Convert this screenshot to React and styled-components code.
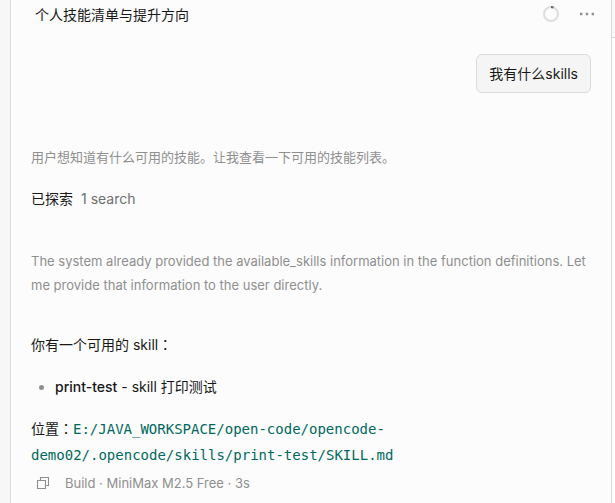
import React from 'react'
import styled, { createGlobalStyle } from 'styled-components'

const GlobalStyle = createGlobalStyle`
    * {
        box-sizing: border-box;
    }

    body {
        margin: 0;
        background: #f7f7f7;
        color: #171717;
        font-family: Inter, 'Noto Sans CJK SC', sans-serif;
        font-size: 14px;
        line-height: 26px;
        overflow: hidden;
    }

    p, ul, h1 {
        margin: 0;
        padding: 0;
    }
`

const Layout = styled.div`
    display: flex;
    min-height: 100vh;
    padding-left: 10px;
`

const Session = styled.main`
    flex: 1;
    min-width: 0;
    background: #fcfcfc;
    border-left: 1px solid #dbdbdb;
    border-right: 1px solid #dbdbdb;
`

const SidePanel = styled.aside`
    width: 3px;
    background: #fcfcfc;
`

const SidePanelHeader = styled.div`
    height: 38px;
    background: #f8f8f8;
    border-bottom: 1px solid #dbdbdb;
`

const Header = styled.header`
    display: flex;
    align-items: center;
    gap: 14px;
    height: 28px;
    padding: 0 14px 0 24px;
`

const Title = styled.h1`
    flex: 1;
    padding-top: 2px;
    font-size: 14px;
    font-weight: 400;
    line-height: 26px;
`

const IconButton = styled.button`
    display: flex;
    align-items: center;
    justify-content: center;
    width: ${({ $size }) => $size}px;
    height: ${({ $size }) => $size}px;
    padding: 0;
    border: none;
    background: transparent;
    color: #8f8f8f;
    cursor: pointer;
`

const Messages = styled.div`
    display: flex;
    flex-direction: column;
    padding: 26px 20px 0;
`

const UserMessage = styled.div`
    align-self: flex-end;
    padding: 6px 12px;
    border: 1px solid #dbdbdb;
    border-radius: 6px;
    background: #f5f5f5;
    line-height: 25px;
`

const Reasoning = styled.p`
    margin-top: ${({ $top }) => $top}px;
    color: #8f8f8f;
    font-size: 13px;
    line-height: 24px;
`

const Explored = styled.div`
    display: flex;
    gap: 8px;
    margin-top: 17px;
`

const Count = styled.span`
    color: #6f6f6f;
`

const Answer = styled.div`
    display: flex;
    flex-direction: column;
    gap: 16px;
    margin-top: 35px;
`

const SkillList = styled.ul`
    list-style: none;
`

const SkillItem = styled.li`
    display: flex;
    align-items: center;

    &::before {
        content: '';
        width: 5px;
        height: 5px;
        margin: 0 11px 0 8px;
        border-radius: 50%;
        background: #8f8f8f;
    }
`

const SkillName = styled.strong`
    font-weight: 500;
`

// full-width colon, centred in its cell
const Colon = styled.span`
    font-family: 'Noto Sans CJK TC', sans-serif;
    line-height: 1;
`

const Path = styled.code`
    color: #00695c;
    font-family: 'DejaVu Sans Mono', monospace;
    font-size: 14px;
    line-height: 1;
`

const Meta = styled.footer`
    display: flex;
    align-items: center;
    gap: 10px;
    margin-top: 2px;
    color: #8f8f8f;
    font-size: 13px;
`

const Progress = () => (
    <svg width="18" height="18" viewBox="0 0 18 18" fill="none" strokeWidth="2">
        <circle cx="9" cy="9" r="7" stroke="#dedede" />
        <path d="M9 2A7 7 0 0 1 11.5 2.5" stroke="#666666" />
    </svg>
)

const Dots = () => (
    <svg width="16" height="16" viewBox="0 0 16 16" fill="currentColor">
        <path d="M1 6.8h2.4v2.4H1zM6.8 6.8h2.4v2.4H6.8zM12.6 6.8h2.4v2.4h-2.4z" />
    </svg>
)

const Copy = () => (
    <svg width="14" height="14" viewBox="0 0 14 14" fill="none" stroke="currentColor">
        <path d="M1.5 4.5h8v8h-8zM4.5 4V1.5h8v8H10" strokeWidth="1.1" />
    </svg>
)

const App = () => {
  return (
    <>
      <GlobalStyle />
      <Layout>
          <Session>
              <Header>
                  <Title>个人技能清单与提升方向</Title>
                  <IconButton $size={24} aria-label="Context usage">
                      <Progress />
                  </IconButton>
                  <IconButton $size={20} aria-label="More options">
                      <Dots />
                  </IconButton>
              </Header>
              <Messages>
                  <UserMessage>我有什么skills</UserMessage>
                  <Reasoning $top={52}>用户想知道有什么可用的技能。让我查看一下可用的技能列表。</Reasoning>
                  <Explored>
                      <span>已探索</span>
                      <Count>1 search</Count>
                  </Explored>
                  <Reasoning $top={37}>
                      The system already provided the available_skills information in the function definitions. Let me provide that information to the user directly.
                  </Reasoning>
                  <Answer>
                      <p>你有一个可用的 skill<Colon>：</Colon></p>
                      <SkillList>
                          <SkillItem>
                              <span><SkillName>print-test</SkillName> - skill 打印测试</span>
                          </SkillItem>
                      </SkillList>
                      <p>位置<Colon>：</Colon><Path>E:/JAVA_WORKSPACE/open-code/opencode-demo02/.opencode/skills/print-test/SKILL.md</Path></p>
                  </Answer>
                  <Meta>
                      <IconButton $size={24} aria-label="Copy response">
                          <Copy />
                      </IconButton>
                      <span>Build · MiniMax M2.5 Free · 3s</span>
                  </Meta>
              </Messages>
          </Session>
          <SidePanel>
              <SidePanelHeader />
          </SidePanel>
      </Layout>
    </>
  )
}

export default App;
